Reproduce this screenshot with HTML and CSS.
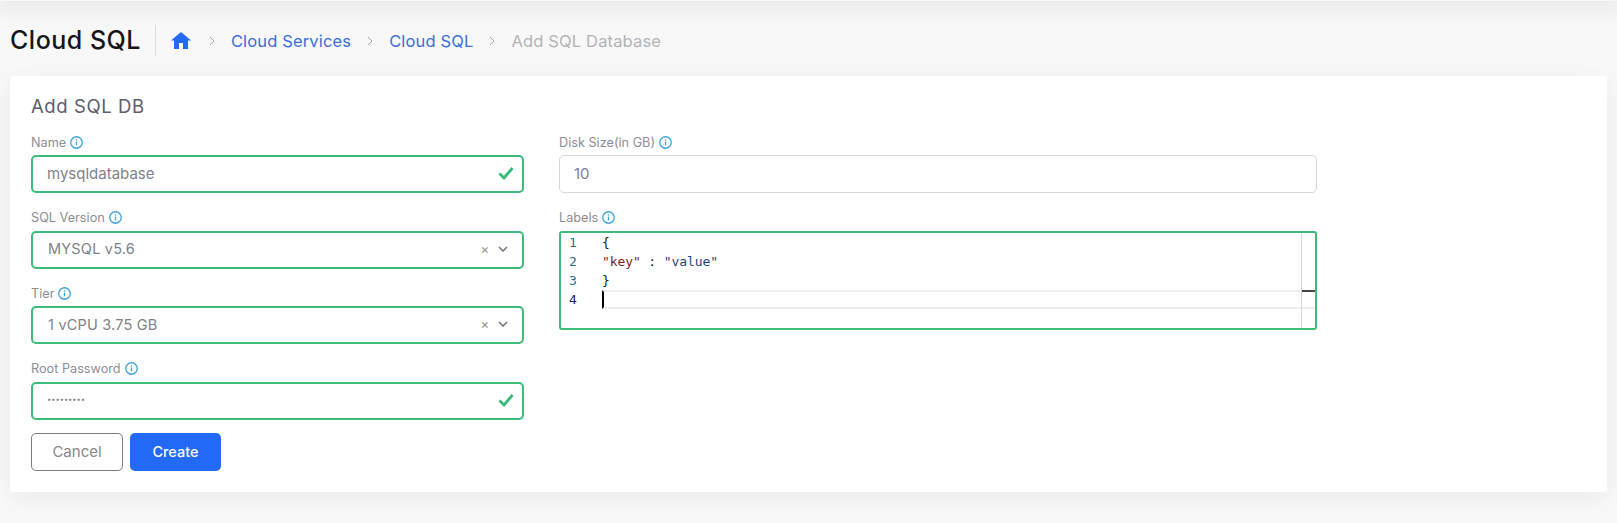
FILE: index.html
```html
<!DOCTYPE html>
<html lang="en">

<head>
    <meta charset="UTF-8">
    <meta name="viewport" content="width=device-width, initial-scale=1.0">
    <title>Add SQL Database</title>
    <link rel="stylesheet" href="styles.css">
</head>

<body>
    <svg class="defs" width="0" height="0">
        <symbol id="info" viewBox="0 0 14 14">
            <circle cx="7" cy="7" r="6.2" fill="none" stroke="#3aa3dc" stroke-width="1.4"></circle>
            <rect x="6.3" y="6" width="1.4" height="4" fill="#3aa3dc"></rect>
            <rect x="6.3" y="3.6" width="1.4" height="1.4" fill="#3aa3dc"></rect>
        </symbol>
        <symbol id="check" viewBox="0 0 16 14">
            <path d="M1.5 7.5 L6 12 L14.5 2" fill="none" stroke="#35bb78" stroke-width="2.8"></path>
        </symbol>
        <symbol id="chevron" viewBox="0 0 10 6">
            <path d="M1 1 L5 5 L9 1" fill="none" stroke="#777" stroke-width="1.6"></path>
        </symbol>
        <symbol id="crumb-sep" viewBox="0 0 6 10">
            <path d="M1 1 L5 5 L1 9" fill="none" stroke="#a5a5a5" stroke-width="1"></path>
        </symbol>
    </svg>

    <div class="topbar"></div>

    <div class="page-head">
        <h1>Cloud SQL</h1>
        <nav class="crumbs">
            <svg class="home" viewBox="0 0 20 17">
                <path d="M10 0 L20 8.5 L17 8.5 L17 17 L12 17 L12 11 L8 11 L8 17 L3 17 L3 8.5 L0 8.5 Z" fill="#2269f5"></path>
            </svg>
            <svg class="sep"><use href="#crumb-sep"></use></svg>
            <a>Cloud Services</a>
            <svg class="sep"><use href="#crumb-sep"></use></svg>
            <a>Cloud SQL</a>
            <svg class="sep"><use href="#crumb-sep"></use></svg>
            <span class="current">Add SQL Database</span>
        </nav>
    </div>

    <main class="card">
        <h2>Add SQL DB</h2>
        <div class="columns">
            <div class="col-left">
                <div class="field">
                    <label>Name <svg class="info"><use href="#info"></use></svg></label>
                    <div class="control valid">
                        <input type="text" value="mysqldatabase">
                        <svg class="check"><use href="#check"></use></svg>
                    </div>
                </div>
                <div class="field">
                    <label>SQL Version <svg class="info"><use href="#info"></use></svg></label>
                    <div class="control valid">
                        <span class="value">MYSQL v5.6</span>
                        <span class="clear">×</span>
                        <svg class="chevron"><use href="#chevron"></use></svg>
                    </div>
                </div>
                <div class="field">
                    <label>Tier <svg class="info"><use href="#info"></use></svg></label>
                    <div class="control valid">
                        <span class="value">1 vCPU 3.75 GB</span>
                        <span class="clear">×</span>
                        <svg class="chevron"><use href="#chevron"></use></svg>
                    </div>
                </div>
                <div class="field">
                    <label>Root Password <svg class="info"><use href="#info"></use></svg></label>
                    <div class="control valid">
                        <input class="password" type="password" value="password1">
                        <svg class="check"><use href="#check"></use></svg>
                    </div>
                </div>
                <div class="actions">
                    <button class="btn btn-cancel">Cancel</button>
                    <button class="btn btn-create">Create</button>
                </div>
            </div>
            <div class="col-right">
                <div class="field">
                    <label>Disk Size(in GB) <svg class="info"><use href="#info"></use></svg></label>
                    <div class="control">
                        <input type="text" value="10">
                    </div>
                </div>
                <div class="field">
                    <label>Labels <svg class="info"><use href="#info"></use></svg></label>
                    <div class="editor">
                        <div class="gutter">
                            <div>1</div>
                            <div>2</div>
                            <div>3</div>
                            <div class="active-num">4</div>
                        </div>
                        <div class="code">
                            <div>{</div>
                            <div><span class="tok-key">"key"</span> : <span class="tok-val">"value"</span></div>
                            <div>}</div>
                            <div class="active-line"></div>
                        </div>
                        <div class="ruler"><span class="ruler-mark"></span></div>
                    </div>
                </div>
            </div>
        </div>
    </main>
</body>

</html>
```

FILE: styles.css
```css
* {
    box-sizing: border-box;
}

body {
    margin: 0;
    height: 523px;
    overflow: hidden;
    background-color: #f8f8f8;
    font-family: Inter, "Open Sans", sans-serif;
    color: #6c6f7a;
}

.defs {
    position: absolute;
}

.topbar {
    height: 1px;
    box-shadow: 0 0 22px 8px rgba(0, 0, 0, 0.08);
}

.page-head {
    display: flex;
    align-items: center;
    height: 31px;
    margin: 24px 0 20px 10px;
}

h1 {
    margin: 0;
    padding-right: 14px;
    height: 31px;
    line-height: 30px;
    border-right: 1px solid #dcdcdc;
    font-size: 25px;
    font-weight: 500;
    letter-spacing: 0.5px;
    color: #15161a;
}

.crumbs {
    display: flex;
    align-items: center;
    padding-left: 15px;
    font-size: 16.5px;
    letter-spacing: 0.15px;
}

.home {
    width: 20px;
    height: 17px;
}

.sep {
    width: 6px;
    height: 10px;
    margin: 0 16px;
}

.crumbs .home + .sep {
    margin: 0 16px 0 18px;
}

.crumbs a {
    color: #3a6fd8;
}

.current {
    color: #b3b3b3;
}

.card {
    margin: 0 10px;
    height: 416px;
    padding: 20px 21px;
    background-color: #fff;
    border-radius: 3px;
    box-shadow: 0 6px 24px rgba(0, 0, 0, 0.06);
}

h2 {
    margin: 0 0 15px;
    height: 20px;
    line-height: 20px;
    font-size: 18.5px;
    font-weight: 400;
    letter-spacing: 0.6px;
    color: #5b5d6b;
}

.columns {
    display: flex;
    gap: 35px;
}

.col-left {
    width: 493px;
}

.col-right {
    width: 758px;
}

.field {
    margin-bottom: 13.5px;
}

label {
    display: flex;
    align-items: center;
    gap: 4px;
    height: 22px;
    margin-bottom: 2px;
    font-size: 12.7px;
    color: #8b8d95;
}

.info {
    width: 13px;
    height: 13px;
}

.control {
    display: flex;
    align-items: center;
    height: 38px;
    padding: 0 14px 2px 14px;
    border: 1px solid #d6d6d6;
    border-radius: 5px;
    background-color: #fff;
    font-size: 15px;
}

.control.valid {
    border: 2px solid #3dbb78;
}

.control input {
    flex: 1;
    min-width: 0;
    padding: 0;
    border: 0;
    outline: 0;
    font: inherit;
    color: #7f8188;
}

.control .password {
    font-size: 7.5px;
    letter-spacing: 0;
}

.value {
    flex: 1;
    padding-left: 1px;
    font-size: 14.5px;
    letter-spacing: 0.2px;
    color: #7f8188;
}

.clear {
    margin-right: 9px;
    font-size: 13px;
    color: #8f8f8f;
}

.chevron {
    width: 10px;
    height: 6px;
}

.check {
    width: 16px;
    height: 14px;
    margin-right: -6px;
}

.actions {
    display: flex;
    gap: 7px;
    margin-top: 1px;
}

.btn {
    width: 92px;
    height: 37.5px;
    border-radius: 5px;
    font-family: inherit;
    font-size: 15px;
}

.btn-cancel {
    border: 1px solid #7d7d7d;
    background-color: #fff;
    color: #85878e;
}

.btn-create {
    width: 91px;
    border: 0;
    background-color: #2269f5;
    color: #fff;
    font-size: 14.5px;
    font-weight: 500;
}

.editor {
    display: flex;
    height: 99px;
    border: 2px solid #3dbb78;
    border-radius: 3px;
    background-color: #fff;
    font-family: "DejaVu Sans Mono", "Liberation Mono", monospace;
    font-size: 13px;
    letter-spacing: -0.1px;
    line-height: 19px;
}

.gutter {
    width: 41px;
    padding-left: 8px;
    color: #2b6f8a;
}

.active-num {
    color: #102a66;
}

.code {
    flex: 1;
    color: #1a1a1a;
}

.tok-key {
    color: #7f1d1d;
}

.tok-val {
    color: #1f3f78;
}

.active-line {
    height: 19px;
    margin-right: -14px;
    border-top: 2px solid #eeeeee;
    border-bottom: 2px solid #eeeeee;
    border-left: 2px solid #000;
}

.ruler {
    width: 14px;
    border-left: 1px solid #d4d4d4;
}

.ruler-mark {
    display: block;
    height: 2px;
    margin-top: 57px;
    background-color: #444;
}
```
